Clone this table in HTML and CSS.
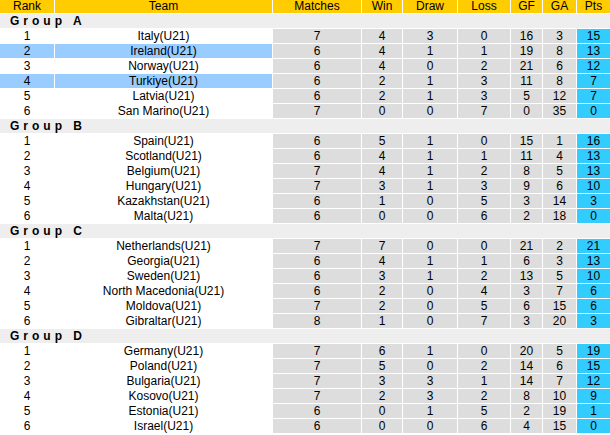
FILE: index.html
```html
<!DOCTYPE html>
<html>
<head>
<meta charset="utf-8">
<link rel="stylesheet" href="styles.css">
</head>
<body>
<table class="standings">
<colgroup>
<col class="c-rank"><col class="c-team"><col class="c-m"><col class="c-w"><col class="c-d"><col class="c-l"><col class="c-gf"><col class="c-ga"><col class="c-pts">
</colgroup>
<thead>
<tr><th>Rank</th><th>Team</th><th>Matches</th><th>Win</th><th>Draw</th><th>Loss</th><th>GF</th><th>GA</th><th>Pts</th></tr>
</thead>
<tbody>
<tr class="group"><td colspan="9">Group A</td></tr>
<tr><td class="rk">1</td><td class="tm">Italy(U21)</td><td>7</td><td>4</td><td>3</td><td>0</td><td>16</td><td>3</td><td class="pts">15</td></tr>
<tr class="hl"><td class="rk">2</td><td class="tm">Ireland(U21)</td><td>6</td><td>4</td><td>1</td><td>1</td><td>19</td><td>8</td><td class="pts">13</td></tr>
<tr><td class="rk">3</td><td class="tm">Norway(U21)</td><td>6</td><td>4</td><td>0</td><td>2</td><td>21</td><td>6</td><td class="pts">12</td></tr>
<tr class="hl"><td class="rk">4</td><td class="tm">Turkiye(U21)</td><td>6</td><td>2</td><td>1</td><td>3</td><td>11</td><td>8</td><td class="pts">7</td></tr>
<tr><td class="rk">5</td><td class="tm">Latvia(U21)</td><td>6</td><td>2</td><td>1</td><td>3</td><td>5</td><td>12</td><td class="pts">7</td></tr>
<tr><td class="rk">6</td><td class="tm">San Marino(U21)</td><td>7</td><td>0</td><td>0</td><td>7</td><td>0</td><td>35</td><td class="pts">0</td></tr>
<tr class="group"><td colspan="9">Group B</td></tr>
<tr><td class="rk">1</td><td class="tm">Spain(U21)</td><td>6</td><td>5</td><td>1</td><td>0</td><td>15</td><td>1</td><td class="pts">16</td></tr>
<tr><td class="rk">2</td><td class="tm">Scotland(U21)</td><td>6</td><td>4</td><td>1</td><td>1</td><td>11</td><td>4</td><td class="pts">13</td></tr>
<tr><td class="rk">3</td><td class="tm">Belgium(U21)</td><td>7</td><td>4</td><td>1</td><td>2</td><td>8</td><td>5</td><td class="pts">13</td></tr>
<tr><td class="rk">4</td><td class="tm">Hungary(U21)</td><td>7</td><td>3</td><td>1</td><td>3</td><td>9</td><td>6</td><td class="pts">10</td></tr>
<tr><td class="rk">5</td><td class="tm">Kazakhstan(U21)</td><td>6</td><td>1</td><td>0</td><td>5</td><td>3</td><td>14</td><td class="pts">3</td></tr>
<tr><td class="rk">6</td><td class="tm">Malta(U21)</td><td>6</td><td>0</td><td>0</td><td>6</td><td>2</td><td>18</td><td class="pts">0</td></tr>
<tr class="group"><td colspan="9">Group C</td></tr>
<tr><td class="rk">1</td><td class="tm">Netherlands(U21)</td><td>7</td><td>7</td><td>0</td><td>0</td><td>21</td><td>2</td><td class="pts">21</td></tr>
<tr><td class="rk">2</td><td class="tm">Georgia(U21)</td><td>6</td><td>4</td><td>1</td><td>1</td><td>6</td><td>3</td><td class="pts">13</td></tr>
<tr><td class="rk">3</td><td class="tm">Sweden(U21)</td><td>6</td><td>3</td><td>1</td><td>2</td><td>13</td><td>5</td><td class="pts">10</td></tr>
<tr><td class="rk">4</td><td class="tm">North Macedonia(U21)</td><td>6</td><td>2</td><td>0</td><td>4</td><td>3</td><td>7</td><td class="pts">6</td></tr>
<tr><td class="rk">5</td><td class="tm">Moldova(U21)</td><td>7</td><td>2</td><td>0</td><td>5</td><td>6</td><td>15</td><td class="pts">6</td></tr>
<tr><td class="rk">6</td><td class="tm">Gibraltar(U21)</td><td>8</td><td>1</td><td>0</td><td>7</td><td>3</td><td>20</td><td class="pts">3</td></tr>
<tr class="group"><td colspan="9">Group D</td></tr>
<tr><td class="rk">1</td><td class="tm">Germany(U21)</td><td>7</td><td>6</td><td>1</td><td>0</td><td>20</td><td>5</td><td class="pts">19</td></tr>
<tr><td class="rk">2</td><td class="tm">Poland(U21)</td><td>7</td><td>5</td><td>0</td><td>2</td><td>14</td><td>6</td><td class="pts">15</td></tr>
<tr><td class="rk">3</td><td class="tm">Bulgaria(U21)</td><td>7</td><td>3</td><td>3</td><td>1</td><td>14</td><td>7</td><td class="pts">12</td></tr>
<tr><td class="rk">4</td><td class="tm">Kosovo(U21)</td><td>7</td><td>2</td><td>3</td><td>2</td><td>8</td><td>10</td><td class="pts">9</td></tr>
<tr><td class="rk">5</td><td class="tm">Estonia(U21)</td><td>6</td><td>0</td><td>1</td><td>5</td><td>2</td><td>19</td><td class="pts">1</td></tr>
<tr><td class="rk">6</td><td class="tm">Israel(U21)</td><td>6</td><td>0</td><td>0</td><td>6</td><td>4</td><td>15</td><td class="pts">0</td></tr>
</tbody>
</table>
</body>
</html>
```

FILE: styles.css
```css
html, body {
  margin: 0;
  padding: 0;
  background: #ffffff;
}
body {
  font-family: "Liberation Sans", Arial, sans-serif;
  font-size: 12px;
  color: #000;
  overflow: hidden;
}
.standings {
  border-collapse: separate;
  border-spacing: 1px;
  table-layout: fixed;
  width: 612px;
  margin: -1px 0 0 -1px;
}
.c-rank { width: 54px; }
.c-team { width: 217px; }
.c-m { width: 88px; }
.c-w { width: 40px; }
.c-d { width: 54px; }
.c-l { width: 52px; }
.c-gf { width: 31px; }
.c-ga { width: 33px; }
.c-pts { width: 33px; }
.standings th {
  background: #ffcc00;
  font-weight: normal;
  height: 13px;
  line-height: 13px;
  padding: 0;
  text-align: center;
  white-space: nowrap;
}
.standings td {
  background: #dddddd;
  height: 14px;
  line-height: 14px;
  padding: 0;
  text-align: center;
  white-space: nowrap;
  overflow: hidden;
}
.standings td.rk,
.standings td.tm {
  background: #ffffff;
}
.standings tr.hl td.rk,
.standings tr.hl td.tm {
  background: #99ccff;
}
.standings td.pts {
  background: #33ccff;
}
.standings tr.group td {
  background: #eeeeee;
  text-align: left;
  font-weight: bold;
  letter-spacing: 4px;
  padding-left: 10px;
}
```
